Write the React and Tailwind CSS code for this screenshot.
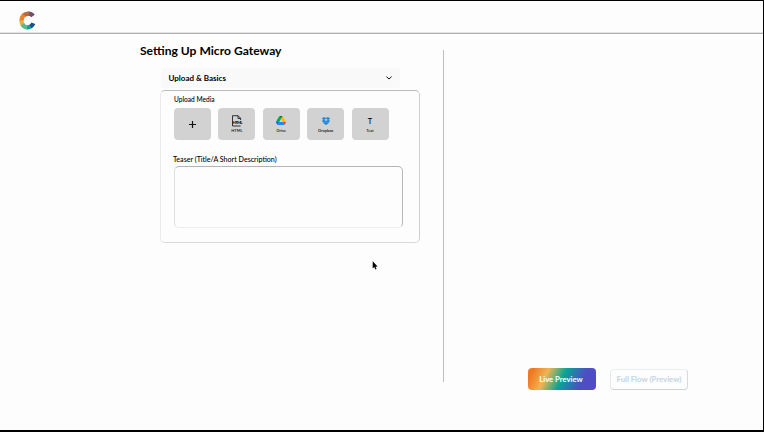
import React from "react";

function Logo() {
  return (
    <svg viewBox="0 0 17 19" width="17" height="19" fill="none" strokeWidth="4.2" className="block overflow-visible">
      <path d="M14 5C12.8 3.2 11.2 2.6 9 2.6" stroke="#665078" />
      <path d="M10.4 2.6C7.6 2.5 5.6 3.3 4.1 4.9" stroke="#b5693f" />
      <path d="M5 3.8C3.2 5.6 2.5 7.5 2.4 10" stroke="#f07f25" />
      <path d="M2.4 9.2C2.4 11.2 2.9 12.9 4.1 14.4" stroke="#e3b040" />
      <path d="M3.4 13.4C4.6 15.4 6.4 16.4 8.8 16.3" stroke="#5cb88f" />
      <path d="M8.1 16.3C10.2 16.5 11.6 15.9 12.7 14.7" stroke="#169c9c" />
      <path d="M11.6 15.5C12.9 14.7 13.8 13.6 14.3 12.2" stroke="#17508f" />
    </svg>
  );
}

function HtmlIcon() {
  return (
    <svg viewBox="0 0 12 12" width="12" height="12" className="block">
      <path d="M1.5 11V.7h5.6L9.6 3.2V5M7 .7v2.8h2.6M1.5 11H9.6" fill="none" stroke="#222" strokeWidth=".9" />
      <path d="M2.8 5.4h8.8v3.8H2.8z" fill="#d2d2d2" />
      <text x="1.6" y="9.2" fontSize="4.4" fontWeight="900" textLength="10" fill="#111">HTML</text>
    </svg>
  );
}

function DriveIcon() {
  return (
    <svg viewBox="0 0 87.3 78" width="10" height="9" className="block">
      <path d="m6.6 66.85 3.85 6.65c.8 1.4 1.95 2.5 3.3 3.3l13.75-23.8h-27.5c0 1.55.4 3.1 1.2 4.5z" fill="#0066da" />
      <path d="m43.65 25-13.75-23.8c-1.35.8-2.5 1.9-3.3 3.3l-25.4 44a9 9 0 0 0-1.2 4.5h27.5z" fill="#00ac47" />
      <path d="m73.55 76.8c1.35-.8 2.5-1.9 3.3-3.3l1.6-2.75 7.65-13.25c.8-1.4 1.2-2.95 1.2-4.5h-27.5l5.85 11.5z" fill="#ea4335" />
      <path d="m43.65 25 13.75-23.8c-1.35-.8-2.9-1.2-4.5-1.2h-18.5c-1.6 0-3.15.45-4.5 1.2z" fill="#00832d" />
      <path d="m59.8 53h-32.3l-13.75 23.8c1.35.8 2.9 1.2 4.5 1.2h50.8c1.6 0 3.15-.45 4.5-1.2z" fill="#2684fc" />
      <path d="m73.4 26.5-12.7-22c-.8-1.4-1.95-2.5-3.3-3.3l-13.75 23.8 16.15 28h27.45c0-1.55-.4-3.1-1.2-4.5z" fill="#ffba00" />
    </svg>
  );
}

function DropboxIcon() {
  return (
    <svg viewBox="0 0 8 8" width="8" height="8" className="block" fill="#1f87dc">
      <path d="M2.3.2 4 1.4 1.8 2.8.1 1.6zM5.7.2 7.9 1.6 6.2 2.8 4 1.4zM1.8 2.8 4 4.2 2.3 5.5.1 4.1zM6.2 2.8 7.9 4.1 5.7 5.5 4 4.2zM4 4.7 5.7 5.9 6.5 5.4V6.1L4 7.8 1.5 6.1V5.4L2.3 5.9z" stroke="#1f87dc" strokeWidth=".5" />
    </svg>
  );
}

function Tile({ icon, label }) {
  return (
    <button className="flex h-8 w-[37px] flex-col items-center rounded-[4px] bg-[#d2d2d2] pt-[6px]">
      <span className="flex h-[13px] items-center justify-center">{icon}</span>
      <span className="mt-[0.5px] text-[4px] leading-[5px] font-medium text-black">{label}</span>
    </button>
  );
}

export default function App() {
  return (
    <div className="relative flex h-[432px] w-[764px] flex-col overflow-hidden border-t border-r border-b-2 border-black bg-[#fdfdfd] font-['Lato',sans-serif] text-black">
      <header className="h-[33px] shrink-0 border-b border-[#b0b0b0]">
        <div className="h-8 border-b border-[#e4e4e4] pt-[9.5px] pl-[18.5px]">
          <Logo />
        </div>
      </header>
      <main className="flex pt-4">
        <section className="h-[332px] w-[444px] border-r border-[#bdbdbd] pl-[140px]">
          <h1 className="-mt-[7px] text-[12.1px] leading-4 font-bold whitespace-nowrap">Setting Up Micro Gateway</h1>
          <div className="mt-[9px] ml-[21px] flex h-5 w-[239px] items-center justify-between rounded-[4px] bg-[#f9f9f9] pr-[8px] pl-[7.5px]">
            <h2 className="text-[8px] leading-3 font-bold">Upload &amp; Basics</h2>
            <svg viewBox="0 0 6 4" width="6" height="4" fill="none" stroke="#111" strokeWidth="1">
              <path d="M.4.6 3 3 5.6.6" />
            </svg>
          </div>
          <div className="mt-[2px] ml-5 h-[153px] w-[260px] rounded-[5px] border border-t-[#bcbcbc] border-r-[#cfcfcf] border-b-[#dadada] border-l-[#eaeaea] pl-[13px]">
            <p className="mt-[4px] text-[6.6px] leading-2 font-medium">Upload Media</p>
            <div className="mt-[5px] flex gap-[7.4px]">
              <button className="flex h-8 w-[37px] items-center justify-center rounded-[4px] bg-[#d2d2d2]">
                <svg viewBox="0 0 8 8" width="8" height="8" stroke="#111" strokeWidth="1.2" className="mt-px">
                  <path d="M3.5 0v7M0 3.5h7" />
                </svg>
              </button>
              <Tile icon={<HtmlIcon />} label="HTML" />
              <Tile icon={<DriveIcon />} label="Drive" />
              <Tile icon={<DropboxIcon />} label="Dropbox" />
              <Tile icon={<span className="mt-[2px] text-[7.5px] leading-2 font-medium">T</span>} label="Text" />
            </div>
            <p className="mt-[14.5px] -ml-px text-[7.1px] leading-[10px] font-medium">Teaser (Title/A Short Description)</p>
            <textarea className="mt-[1.5px] block h-[62px] w-[229px] resize-none rounded-[5px] border border-t-[#b4b4b4] border-r-[#b8b8b8] border-b-[#eeeeee] border-l-[#dedede]" />
          </div>
        </section>
        <section className="flex h-[340px] items-end gap-[14px] pl-[84px]">
          <button className="h-[22px] w-[68px] rounded-[4px] bg-[linear-gradient(115deg,#f07a24_8%,#efb552_27%,#08a594_50%,#4b50c4_76%,#5548c8_100%)] pt-px pr-[2px] text-[7.7px] leading-[21px] font-bold text-white">
            Live Preview
          </button>
          <button className="h-[21px] w-[78px] rounded-[4px] border border-t-[#eaf0f2] border-r-[#d5dade] border-b-[#cfd3d6] border-l-[#e4e8eb] text-[7.75px] leading-[19px] font-bold whitespace-nowrap text-[#c5d4e4]">
            Full Flow (Preview)
          </button>
        </section>
      </main>
      <svg viewBox="0 0 6 9" width="6" height="9" className="absolute top-[260px] left-[372px]">
        <path d="M.7.3v7.2l1.6-1.4 1.1 2.5 1.2-.6-1.1-2.3 2.1-.2z" fill="#000" />
      </svg>
    </div>
  );
}
